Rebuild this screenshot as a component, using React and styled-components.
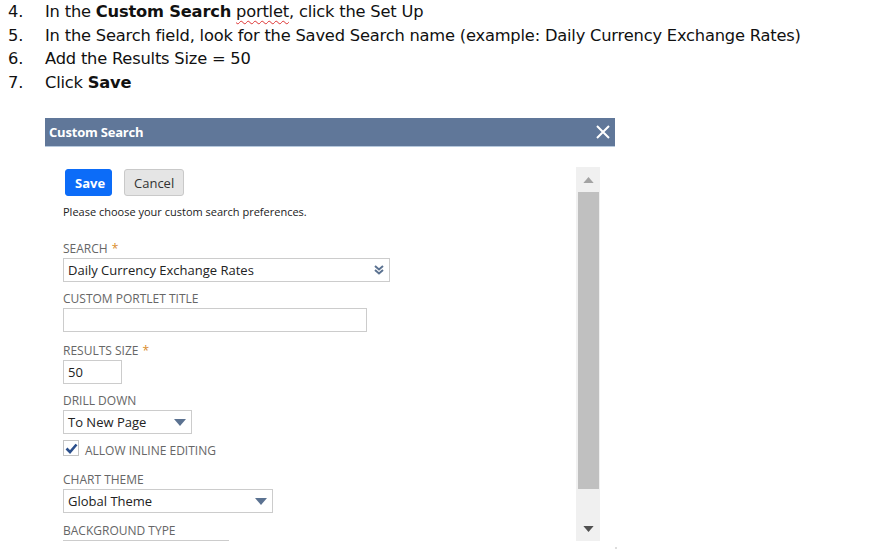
import React from "react";
import styled, { createGlobalStyle } from "styled-components";

const Global = createGlobalStyle`
  html, body { margin: 0; padding: 0; background: #fff; }
  body { width: 895px; height: 550px; overflow: hidden; }
`;

const Page = styled.div`
  position: relative;
  width: 895px;
  height: 550px;
`;

const Steps = styled.ol`
  list-style: none;
  margin: 0;
  padding: 0 0 0 8px;
  font-family: "DejaVu Sans", Verdana, sans-serif;
  font-size: 16.3px;
  line-height: 23.6px;
  color: #111;
  letter-spacing: -0.2px;
`;

const Step = styled.li`
  display: flex;
`;

const Num = styled.span`
  width: 37px;
  flex: none;
`;

const Squiggle = styled.span`
  text-decoration: underline wavy #d33;
  text-decoration-thickness: 1px;
  text-underline-offset: 3px;
`;

const Dialog = styled.div`
  margin: 24px 0 0 45px;
  width: 570px;
  font-family: "Open Sans", "Noto Sans", sans-serif;
`;

const Header = styled.div`
  height: 28px;
  background: #607799;
  border-bottom: 1px solid #b7c9dd;
  display: flex;
  align-items: center;
  justify-content: space-between;
  padding: 0 5px 0 4px;
  box-sizing: content-box;
`;

const Title = styled.span`
  color: #fff;
  font-weight: 700;
  font-size: 13px;
  letter-spacing: -0.2px;
`;

const Body = styled.div`
  height: 394px;
  display: flex;
  overflow: hidden;
  background: #fff;
`;

const Content = styled.div`
  flex: 1;
  padding: 22px 0 0 18px;
  display: flex;
  flex-direction: column;
  align-items: flex-start;
  & > * { flex-shrink: 0; }
`;

const Buttons = styled.div`
  display: flex;
  gap: 12px;
  padding-left: 2px;
`;

const Button = styled.button`
  height: 27px;
  padding: 0 9px;
  border-radius: 3px;
  font-family: "Open Sans", sans-serif;
  font-size: 13px;
  font-weight: ${(p) => (p.$primary ? 700 : 400)};
  color: ${(p) => (p.$primary ? "#fff" : "#333")};
  background: ${(p) => (p.$primary ? "#0c6cf8" : "#e5e5e5")};
  border: 1px solid ${(p) => (p.$primary ? "#0c6cf8" : "#c9c9c9")};
  width: ${(p) => p.$w}px;
`;

const Note = styled.div`
  font-size: 11px;
  color: #222;
  margin-top: 8px;
  line-height: 16px;
`;

const Label = styled.div`
  font-size: 12px;
  line-height: 16px;
  color: #666;
  text-transform: uppercase;
  margin-top: ${(p) => p.$mt}px;
`;

const Star = styled.span`
  color: #d98b2b;
  margin-left: 4px;
`;

const Box = styled.div`
  margin-top: 1px;
  width: ${(p) => p.$w}px;
  height: 24px;
  box-sizing: border-box;
  border: 1px solid #ccc;
  display: flex;
  align-items: center;
  justify-content: space-between;
  padding: 0 5px 0 4px;
  font-size: 13px;
  color: #222;
`;

const CheckRow = styled.div`
  display: flex;
  align-items: flex-start;
  margin-top: 6px;
  gap: 6px;
`;

const CheckBox = styled.div`
  width: 16px;
  height: 16px;
  box-sizing: border-box;
  border: 1px solid #c4c4c4;
  display: flex;
  align-items: center;
  justify-content: center;
`;

const CheckLabel = styled.span`
  font-size: 12px;
  line-height: 14px;
  padding-top: 4px;
  color: #666;
  text-transform: uppercase;
`;

const Scroll = styled.div`
  width: 24px;
  margin: 20px 15px 0 0;
  background: #f0f0f0;
  display: flex;
  flex-direction: column;
  align-items: center;
`;

const ScrollBtn = styled.div`
  height: 25px;
  width: 100%;
  display: flex;
  align-items: center;
  justify-content: center;
`;

const Thumb = styled.div`
  width: 21px;
  height: 297px;
  background: #c0c0c0;
  margin-left: 1px;
`;

const Spacer = styled.div`
  flex: 1;
`;

const Dot = styled.div`
  position: absolute;
  left: 615px;
  top: 547px;
  width: 2px;
  height: 2px;
  background: #ddd;
`;

const Tri = ({ color = "#5b7291", w = 12, h = 7, up = false }) => (
  <svg width={w} height={h} viewBox="0 0 12 7">
    <polygon points={up ? "0,7 12,7 6,0" : "0,0 12,0 6,7"} fill={color} />
  </svg>
);

const DoubleChevron = () => (
  <svg width="10" height="10" viewBox="0 0 10 10">
    <path d="M1 1 L5 4.5 L9 1" stroke="#5b7291" strokeWidth="2" fill="none" />
    <path d="M1 5 L5 8.5 L9 5" stroke="#5b7291" strokeWidth="2" fill="none" />
  </svg>
);

export default function App() {
  return (
    <Page>
      <Global />
      <Steps>
        <Step>
          <Num>4.</Num>
          <span>
            In the <b>Custom Search</b> <Squiggle>portlet</Squiggle>, click the Set Up
          </span>
        </Step>
        <Step>
          <Num>5.</Num>
          <span>
            In the Search field, look for the Saved Search name (example: Daily Currency Exchange Rates)
          </span>
        </Step>
        <Step>
          <Num>6.</Num>
          <span>Add the Results Size = 50</span>
        </Step>
        <Step>
          <Num>7.</Num>
          <span>
            Click <b>Save</b>
          </span>
        </Step>
      </Steps>

      <Dialog>
        <Header>
          <Title>Custom Search</Title>
          <svg width="14" height="14" viewBox="0 0 14 14">
            <path d="M1 1 L13 13 M13 1 L1 13" stroke="#fff" strokeWidth="2" />
          </svg>
        </Header>
        <Body>
          <Content>
            <Buttons>
              <Button $primary $w={47}>Save</Button>
              <Button $w={60}>Cancel</Button>
            </Buttons>
            <Note>Please choose your custom search preferences.</Note>
            <Label $mt={21}>
              Search<Star>*</Star>
            </Label>
            <Box $w={327}>
              <span>Daily Currency Exchange Rates</span>
              <DoubleChevron />
            </Box>
            <Label $mt={9}>Custom Portlet Title</Label>
            <Box $w={304} />
            <Label $mt={11}>
              Results Size<Star>*</Star>
            </Label>
            <Box $w={59}>
              <span>50</span>
            </Box>
            <Label $mt={9}>Drill Down</Label>
            <Box $w={129}>
              <span>To New Page</span>
              <Tri />
            </Box>
            <CheckRow>
              <CheckBox>
                <svg width="13" height="11" viewBox="0 0 13 11">
                  <path d="M1.5 5.5 L5 9 L11.5 1.5" stroke="#2b4f8c" strokeWidth="2.6" fill="none" />
                </svg>
              </CheckBox>
              <CheckLabel>Allow Inline Editing</CheckLabel>
            </CheckRow>
            <Label $mt={14}>Chart Theme</Label>
            <Box $w={210}>
              <span>Global Theme</span>
              <Tri />
            </Box>
            <Label $mt={10}>Background Type</Label>
            <Box $w={166} />
          </Content>
          <Scroll>
            <ScrollBtn>
              <Tri color="#a3a3a3" w={11} h={6} up />
            </ScrollBtn>
            <Thumb />
            <Spacer />
            <ScrollBtn>
              <Tri color="#505050" w={11} h={6} />
            </ScrollBtn>
          </Scroll>
        </Body>
      </Dialog>
      <Dot />
    </Page>
  );
}
